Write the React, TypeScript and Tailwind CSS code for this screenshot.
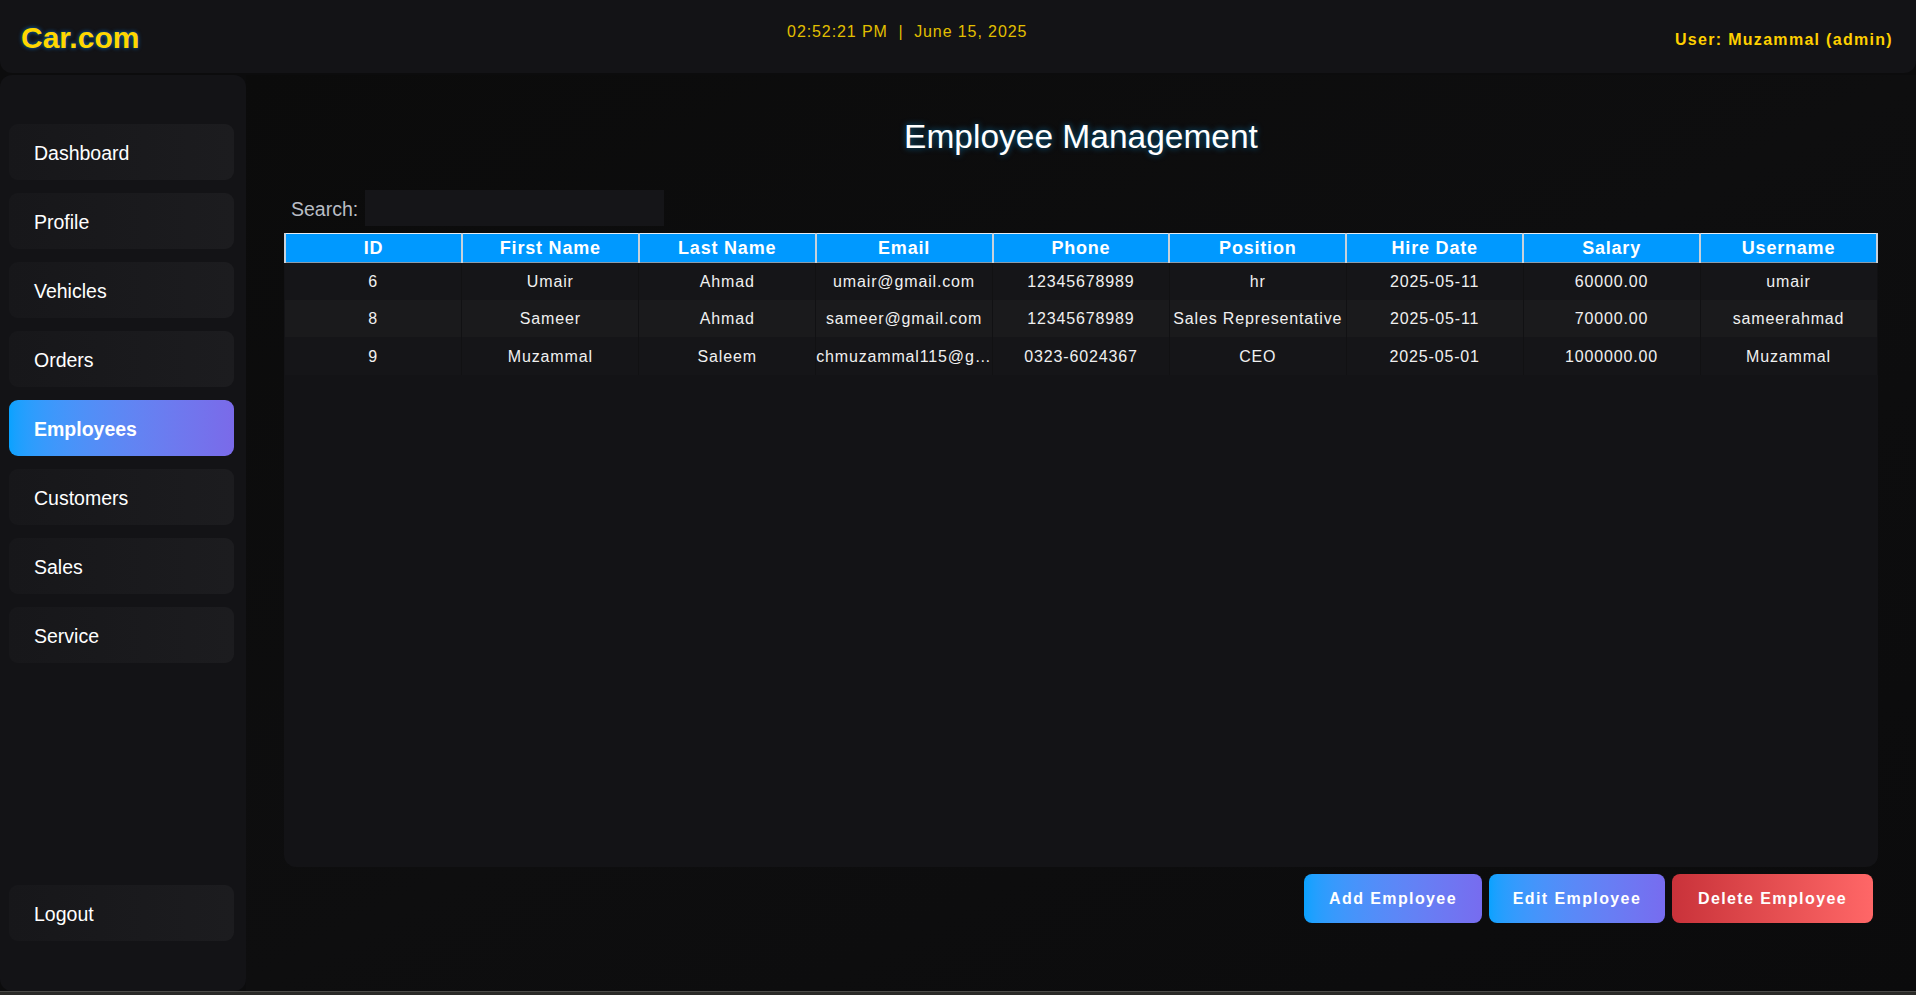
import { type ReactNode } from 'react'

interface Employee {
  id: number
  first: string
  last: string
  email: string
  phone: string
  position: string
  hired: string
  salary: string
  username: string
}

const EMPLOYEES: Employee[] = [
  { id: 6, first: 'Umair', last: 'Ahmad', email: 'umair@gmail.com', phone: '12345678989', position: 'hr', hired: '2025-05-11', salary: '60000.00', username: 'umair' },
  { id: 8, first: 'Sameer', last: 'Ahmad', email: 'sameer@gmail.com', phone: '12345678989', position: 'Sales Representative', hired: '2025-05-11', salary: '70000.00', username: 'sameerahmad' },
  { id: 9, first: 'Muzammal', last: 'Saleem', email: 'chmuzammal115@gmail.com', phone: '0323-6024367', position: 'CEO', hired: '2025-05-01', salary: '1000000.00', username: 'Muzammal' },
]

const COLUMNS = ['ID', 'First Name', 'Last Name', 'Email', 'Phone', 'Position', 'Hire Date', 'Salary', 'Username']

const NAV = ['Dashboard', 'Profile', 'Vehicles', 'Orders', 'Employees', 'Customers', 'Sales', 'Service']

function NavItem({ label, active }: { label: string; active?: boolean }) {
  return (
    <div
      className={`h-[56px] shrink-0 rounded-[9px] flex items-center pl-[25px] pt-[4px] text-[19.5px] text-white ${
        active
          ? 'bg-gradient-to-r from-[#08a2ff] to-[#7a6ae9] font-bold'
          : 'bg-gradient-to-r from-[#17171a] to-[#1c1c1f]'
      }`}
    >
      {label}
    </div>
  )
}

function ActionButton({ children, danger, width }: { children: ReactNode; danger?: boolean; width: string }) {
  return (
    <button
      className={`${width} h-[49px] pt-[2px] rounded-[8px] text-white font-bold text-[16px] tracking-[1.4px] ${
        danger
          ? 'bg-gradient-to-r from-[#c9323a] to-[#ff6767]'
          : 'bg-gradient-to-r from-[#08a2ff] to-[#776cef]'
      }`}
    >
      {children}
    </button>
  )
}

export default function App() {
  return (
    <div className="w-[1916px] h-[995px] overflow-hidden bg-[#0c0c0d] flex flex-col font-['Liberation_Sans',Arial,sans-serif]">
      <header className="h-[73px] shrink-0 bg-[#131316] rounded-b-[12px] flex items-start justify-between pt-[23px] pl-[21px] pr-[23px]">
        <div className="text-[30px] leading-none font-bold text-[#ffd700] [text-shadow:0_0_4px_rgba(0,140,255,0.75)]">Car.com</div>
        <div className="mt-[1px] text-[16px] leading-none text-[#e2bf00] tracking-[0.9px] whitespace-pre">02:52:21 PM  |  June 15, 2025</div>
        <div className="mt-[9px] text-[16px] leading-none font-bold text-[#ffd000] tracking-[1.3px]">User: Muzammal (admin)</div>
      </header>

      <div className="flex-1 flex pt-[2px] min-h-0">
        <aside className="w-[246px] shrink-0 bg-[#131316] rounded-[12px] flex flex-col gap-[13px] pl-[9px] pr-[12px] pt-[49px] pb-[50px]">
          {NAV.map(n => <NavItem key={n} label={n} active={n === 'Employees'} />)}
          <div className="flex-1" />
          <NavItem label="Logout" />
        </aside>

        <main className="flex-1 flex flex-col pl-[38px] pr-[38px] pt-[45px] bg-gradient-to-br from-[#0b0b0b] via-[#0e0e0f] to-[#0b0b0c]">
          <h1 className="text-center text-[33.5px] leading-none text-white [text-shadow:0_0_6px_rgba(0,170,255,0.55)]">Employee Management</h1>

          <div className="mt-[36px] h-[36px] flex items-center gap-[7px] pl-[7px]">
            <span className="pt-[4px] text-[19.5px] text-[#b9bdc4]">Search:</span>
            <input className="w-[299px] h-[36px] bg-[#151518] outline-none text-white px-2" />
          </div>

          <div className="mt-[7px] h-[634px] bg-[#131316] rounded-b-[12px] overflow-hidden">
            <table className="w-full table-fixed border-collapse">
              <thead>
                <tr className="h-[29px] bg-[#0099ff]">
                  {COLUMNS.map(c => (
                    <th key={c} className="border-t border-x-2 border-b border-t-[#e4ecf4] border-x-[#c8d2dc] border-b-[#8d9cab] text-white font-bold text-[18px] tracking-[0.8px] leading-none">
                      {c}
                    </th>
                  ))}
                </tr>
              </thead>
              <tbody>
                {EMPLOYEES.map((e, i) => (
                  <tr key={e.id} className={`h-[37.5px] ${i % 2 === 1 ? 'bg-[#1a1a1c]' : 'bg-[#151518]'}`}>
                    {[String(e.id), e.first, e.last, e.email, e.phone, e.position, e.hired, e.salary, e.username].map((v, j) => (
                      <td key={j} className="border-r border-[#111113] text-center text-[16px] tracking-[0.85px] text-[#f0f0f0] truncate px-0 pt-[2px]">
                        {v}
                      </td>
                    ))}
                  </tr>
                ))}
              </tbody>
            </table>
          </div>

          <div className="mt-[7px] flex justify-end gap-[7px] pr-[5px]">
            <ActionButton width="w-[178px]">Add Employee</ActionButton>
            <ActionButton width="w-[176px]">Edit Employee</ActionButton>
            <ActionButton width="w-[201px]" danger>Delete Employee</ActionButton>
          </div>
        </main>
      </div>

      <div className="h-[4px] shrink-0 bg-[#2a2a28] border-t border-[#4a4a47]" />
    </div>
  )
}
